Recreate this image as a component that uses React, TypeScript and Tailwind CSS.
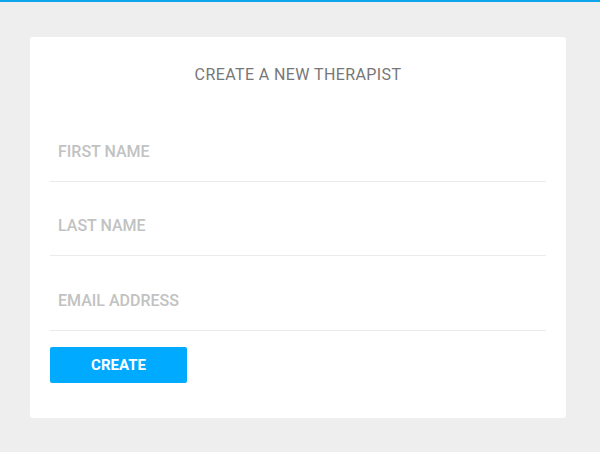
import React from 'react';

const fields = [
  { label: 'FIRST NAME', h: 'h-[74px]' },
  { label: 'LAST NAME', h: 'h-[74px]' },
  { label: 'EMAIL ADDRESS', h: 'h-[75px]' },
];

export default function App() {
  return (
    <div className="min-h-[452px] bg-[#eeeeee] font-['Roboto','Liberation_Sans',sans-serif]">
      {/* Top accent bar */}
      <div className="h-[2px] bg-[#0ea5ea]" />

      <div className="px-[30px] pt-[35px]">
        <form className="w-[536px] rounded-[3px] bg-white px-5 pt-[28px] pb-[35px]">
          <h1 className="text-center text-[16px] leading-5 tracking-[0.4px] text-[#777777]">
            CREATE A NEW THERAPIST
          </h1>

          <div className="mt-[23px]">
            {fields.map((f) => (
              <div
                key={f.label}
                className={`flex ${f.h} items-end border-b border-[#ebebeb] px-2 pb-[21px]`}
              >
                <span className="text-[16px] leading-4 font-medium text-[#c2c2c2]">{f.label}</span>
              </div>
            ))}
          </div>

          <button
            type="button"
            className="mt-4 h-9 w-[137px] rounded-[2px] bg-[#00aaff] text-[15px] font-bold text-white"
          >
            CREATE
          </button>
        </form>
      </div>
    </div>
  );
}
